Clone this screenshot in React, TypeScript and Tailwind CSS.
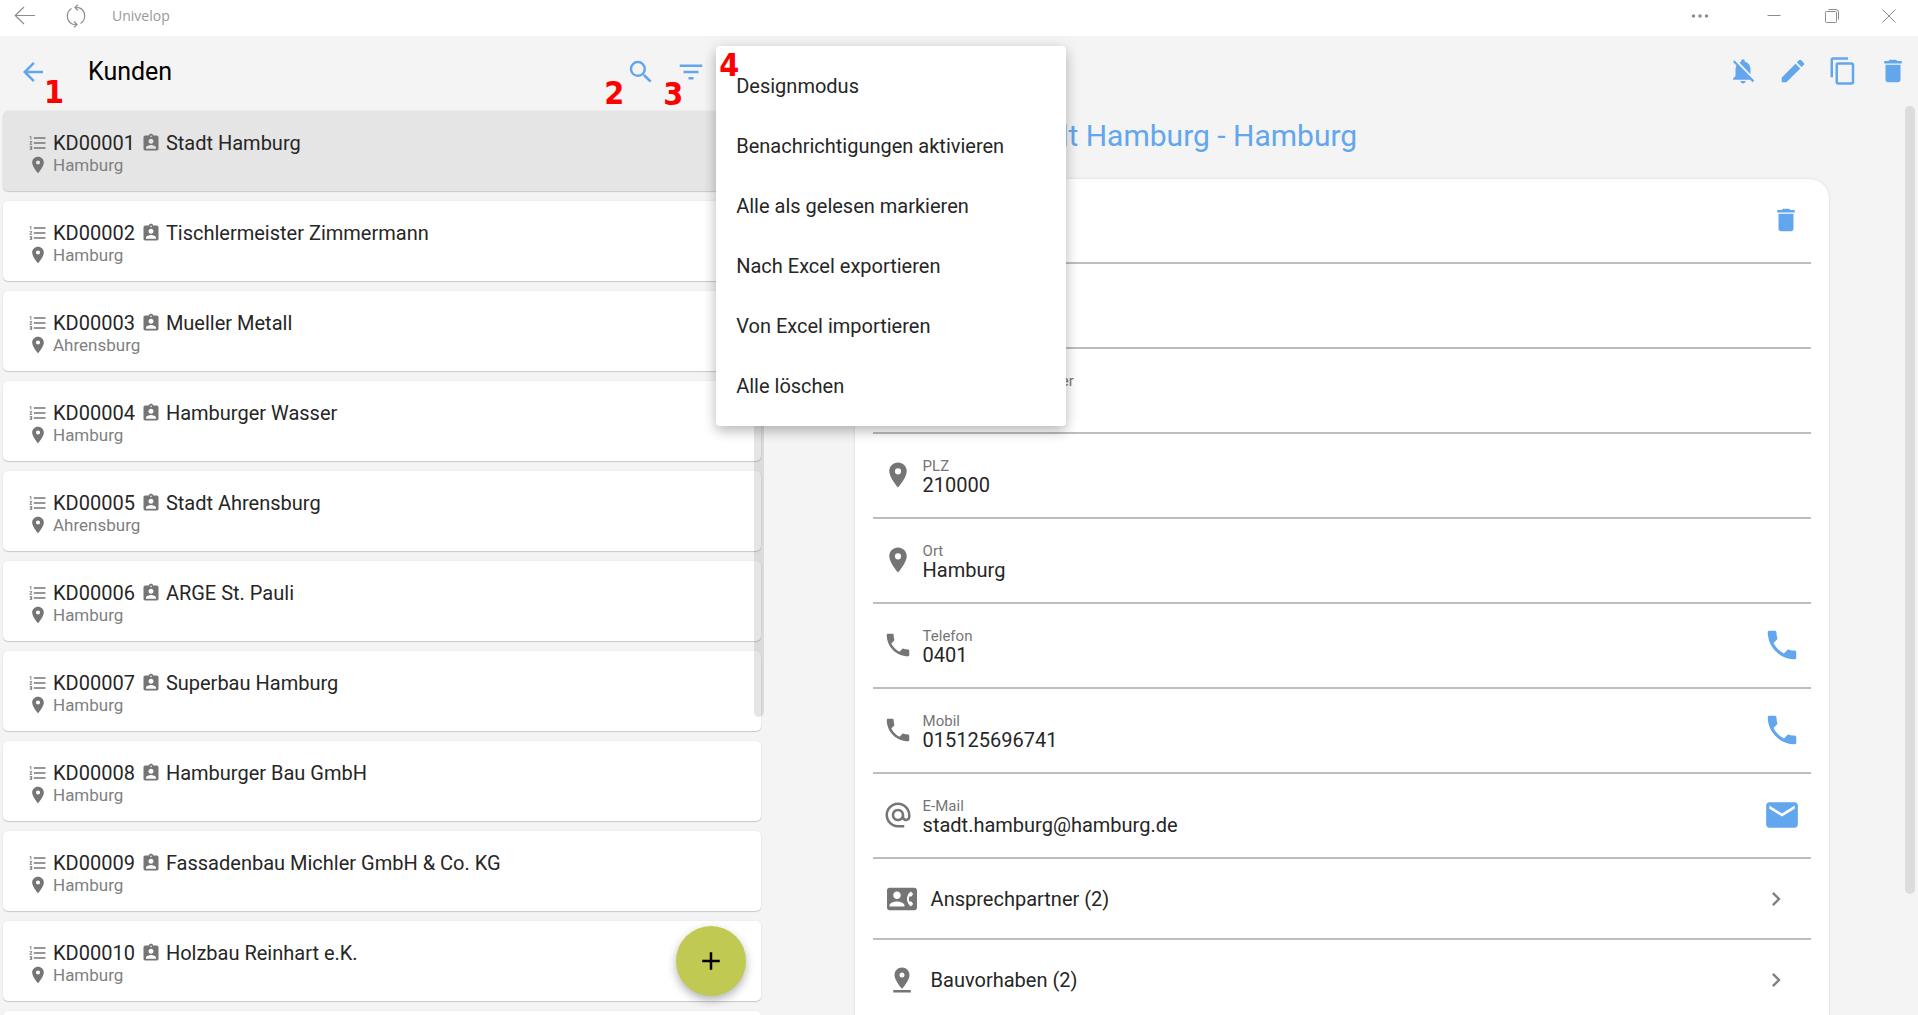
import type { ReactNode } from "react";
import type { IconType } from "react-icons";
import {
  MdAdd,
  MdAlternateEmail,
  MdArrowBack,
  MdAssignmentInd,
  MdChevronRight,
  MdContactPhone,
  MdContentCopy,
  MdDelete,
  MdEdit,
  MdEmail,
  MdFilterList,
  MdFormatListNumbered,
  MdMoreVert,
  MdNotificationsOff,
  MdPhone,
  MdPinDrop,
  MdPlace,
  MdSearch,
} from "react-icons/md";

const customers = [
  { id: "KD00001", name: "Stadt Hamburg", city: "Hamburg" },
  { id: "KD00002", name: "Tischlermeister Zimmermann", city: "Hamburg" },
  { id: "KD00003", name: "Mueller Metall", city: "Ahrensburg" },
  { id: "KD00004", name: "Hamburger Wasser", city: "Hamburg" },
  { id: "KD00005", name: "Stadt Ahrensburg", city: "Ahrensburg" },
  { id: "KD00006", name: "ARGE St. Pauli", city: "Hamburg" },
  { id: "KD00007", name: "Superbau Hamburg", city: "Hamburg" },
  { id: "KD00008", name: "Hamburger Bau GmbH", city: "Hamburg" },
  { id: "KD00009", name: "Fassadenbau Michler GmbH & Co. KG", city: "Hamburg" },
  { id: "KD00010", name: "Holzbau Reinhart e.K.", city: "Hamburg" },
];

const menuItems = [
  "Designmodus",
  "Benachrichtigungen aktivieren",
  "Alle als gelesen markieren",
  "Nach Excel exportieren",
  "Von Excel importieren",
  "Alle löschen",
];

function TitleBar() {
  return (
    <div className="flex h-9 shrink-0 items-center bg-white pb-1 text-[#8c8c8c]">
      <button aria-label="Zurück" className="flex h-8 w-[50px] items-center justify-center">
        <svg width="22" height="20" viewBox="0 0 22 20" fill="none" stroke="currentColor" strokeWidth="1.2">
          <path d="M21 9.5H1.5M10 1 1.2 9.5 10 18" />
        </svg>
      </button>
      <button aria-label="Neu laden" className="flex h-8 w-[52px] items-center justify-center">
        <svg width="20" height="24" viewBox="0 0 20 24" fill="none" stroke="currentColor" strokeWidth="1.2">
          <path d="M5.5 4.6A8.8 8.8 0 0 0 6.5 20.1L11 20.5" />
          <path d="M14.5 19.4A8.8 8.8 0 0 0 13.5 3.9L9 3.5" />
          <path d="M12 .7 9 3.5l3 3.2" />
          <path d="M8 17.3 11 20.5l-3 2.8" />
        </svg>
      </button>
      <span className="ml-[10px] font-['Open_Sans',sans-serif] text-sm text-[#999999]">Univelop</span>
      <div className="ml-auto flex items-center">
        <button aria-label="Weitere Optionen" className="flex h-8 w-[70px] items-center justify-center">
          <svg width="18" height="6" viewBox="0 0 18 6" fill="currentColor">
            <circle cx="2.5" cy="3" r="1.7" />
            <circle cx="9" cy="3" r="1.7" />
            <circle cx="15.5" cy="3" r="1.7" />
          </svg>
        </button>
        <div className="flex pl-[10px]">
          <button aria-label="Minimieren" className="flex h-8 w-[58px] items-center justify-center">
            <svg width="14" height="14" viewBox="0 0 14 14" stroke="currentColor">
              <path d="M.5 6.5h13" />
            </svg>
          </button>
          <button aria-label="Verkleinern" className="flex h-8 w-[57px] items-center justify-center">
            <svg width="14" height="14" viewBox="0 0 14 14" fill="none" stroke="currentColor">
              <rect x=".5" y="2.5" width="11" height="11" rx="1" />
              <path d="M3.5.5H11A2.5 2.5 0 0 1 13.5 3v7.5" />
            </svg>
          </button>
          <button aria-label="Schließen" className="flex h-8 w-[58px] items-center justify-center">
            <svg width="14" height="14" viewBox="0 0 14 14" stroke="currentColor">
              <path d="m.5.5 13 13M13.5.5l-13 13" />
            </svg>
          </button>
        </div>
      </div>
    </div>
  );
}

function ToolButton({ icon: Icon, label, children }: { icon: IconType; label: string; children?: ReactNode }) {
  return (
    <button aria-label={label} className="relative flex h-[70px] w-[50px] items-center justify-center text-[#62a6ee]">
      <Icon size={30} />
      {children}
    </button>
  );
}

const mark =
  "absolute font-['DejaVu_Sans_Condensed','DejaVu_Sans',sans-serif] text-[32px] leading-8 font-bold text-[#ff0000]";

function ActionMenu() {
  return (
    <ul
      role="menu"
      className="absolute top-[10px] left-0 z-20 w-[350px] rounded bg-white py-[10px] text-left shadow-[0_6px_12px_rgba(0,0,0,0.18),0_2px_16px_rgba(0,0,0,0.12)]"
    >
      {menuItems.map((item) => (
        <li key={item} role="none">
          <button role="menuitem" className="h-[60px] w-full px-5 text-left">
            {item}
          </button>
        </li>
      ))}
    </ul>
  );
}

const cardShape =
  "h-20 w-full rounded-[5px] shadow-[0_1px_1px_rgba(0,0,0,0.16),0_0_2px_rgba(0,0,0,0.08)]";

function CustomerCard({ id, name, city, selected }: { id: string; name: string; city: string; selected: boolean }) {
  return (
    <li>
      <button
        className={`${cardShape} flex flex-col pt-5 pl-[25px] text-left ${selected ? "bg-[#e5e5e5]" : "bg-white"}`}
      >
        <span className="flex items-center gap-[5px] leading-6">
          <MdFormatListNumbered size={20} className="text-[#757575]" />
          <span>{id}</span>
          <span className="flex items-center gap-[5px] pl-px">
            <MdAssignmentInd size={20} className="text-[#757575]" />
            <span>{name}</span>
          </span>
        </span>
        <span className="flex items-center gap-[5px] text-[17px] leading-5 text-[#808080]">
          <MdPlace size={20} className="text-[#757575]" />
          <span>{city}</span>
        </span>
      </button>
    </li>
  );
}

function Field({
  icon: Icon,
  label,
  value,
  action,
}: {
  icon: IconType;
  label: string;
  value: string;
  action?: ReactNode;
}) {
  return (
    <div className="flex h-[85px] items-center gap-[10px] border-b-2 border-[#bdbdbd] px-[10px] pb-[2px]">
      <Icon size={30} className="shrink-0 text-[#757575]" />
      <dl className="flex-1 pt-[2px]">
        <dt className="text-[15px] leading-[18px] text-[#757575]">{label}</dt>
        <dd className="min-h-5 leading-5">{value}</dd>
      </dl>
      {action}
    </div>
  );
}

function SubList({ icon: Icon, label }: { icon: IconType; label: string }) {
  return (
    <button className="flex h-[81px] w-full items-center gap-[14px] border-b-2 border-[#bdbdbd] pr-[21px] pl-[14px] text-left">
      <Icon size={30} className="shrink-0 text-[#757575]" />
      <span className="flex-1">{label}</span>
      <MdChevronRight size={28} className="text-[#808080]" />
    </button>
  );
}

export default function App() {
  return (
    <div className="flex h-screen flex-col overflow-hidden bg-[#f4f4f4] font-[Roboto,sans-serif] text-xl text-[#262626]">
      <TitleBar />
      <div className="flex min-h-0 flex-1">
        <section className="relative flex w-2/5 flex-col">
          <header className="flex h-[71px] shrink-0 items-center pr-px">
            <div className="pl-2">
              <ToolButton icon={MdArrowBack} label="Zurück">
                <span className={`${mark} top-[39px] left-9`}>1</span>
              </ToolButton>
            </div>
            <h1 className="ml-[30px] flex-1 text-[25px] text-black">Kunden</h1>
            <ToolButton icon={MdSearch} label="Suchen">
              <span className={`${mark} top-10 -left-3`}>2</span>
            </ToolButton>
            <ToolButton icon={MdFilterList} label="Filtern">
              <span className={`${mark} top-[41px] -left-[3px]`}>3</span>
            </ToolButton>
            <div className="relative self-stretch">
              <ToolButton icon={MdMoreVert} label="Menü" />
              <ActionMenu />
              <span className={`${mark} top-[13px] left-[3px] z-30`}>4</span>
            </div>
          </header>
          <div className="relative min-h-0 flex-1 overflow-hidden pt-1 pr-[6px] pl-[3px]">
            <ul className="flex flex-col gap-[10px]">
              {customers.map((c, i) => (
                <CustomerCard key={c.id} {...c} selected={i === 0} />
              ))}
              <li aria-hidden="true" className={`${cardShape} bg-white`} />
            </ul>
            <div className="absolute top-0 right-[3px] h-[610px] w-[10px] rounded-full bg-black/10" />
          </div>
          <button
            aria-label="Kunde hinzufügen"
            className="absolute right-[21px] bottom-[19px] flex size-[70px] items-center justify-center rounded-full bg-[#c0ca53] text-black shadow-[0_4px_10px_rgba(0,0,0,0.3)]"
          >
            <MdAdd size={30} />
          </button>
        </section>

        <main className="relative flex min-w-0 flex-1 flex-col">
          <header className="flex h-[70px] shrink-0 justify-end">
            <ToolButton icon={MdNotificationsOff} label="Benachrichtigungen aus" />
            <ToolButton icon={MdEdit} label="Bearbeiten" />
            <ToolButton icon={MdContentCopy} label="Kopieren" />
            <ToolButton icon={MdDelete} label="Löschen" />
          </header>
          <div className="min-h-0 flex-1 overflow-hidden pr-[2px]">
            <div className="mx-auto w-[85%] max-w-[974px]">
              <h2 className="flex h-[73px] items-center pb-[14px] pl-[153px] text-[30px] text-[#62a6ee]">
                Stadt Hamburg - Hamburg
              </h2>
              <div className="rounded-[20px] bg-white px-[18px] pb-5 shadow-[0_0_3px_rgba(0,0,0,0.12)]">
                <Field
                  icon={MdFormatListNumbered}
                  label="Nummer"
                  value="KD00001"
                  action={
                    <button aria-label="Eintrag löschen" className="text-[#62a6ee]">
                      <MdDelete size={30} />
                    </button>
                  }
                />
                <Field icon={MdAssignmentInd} label="Name" value="Stadt Hamburg" />
                <Field icon={MdPlace} label="Straße & Hausnummer" value="" />
                <Field icon={MdPlace} label="PLZ" value="210000" />
                <Field icon={MdPlace} label="Ort" value="Hamburg" />
                <Field
                  icon={MdPhone}
                  label="Telefon"
                  value="0401"
                  action={
                    <a href="tel:0401" aria-label="Telefon anrufen" className="text-[#62a6ee]">
                      <MdPhone size={38} />
                    </a>
                  }
                />
                <Field
                  icon={MdPhone}
                  label="Mobil"
                  value="015125696741"
                  action={
                    <a href="tel:015125696741" aria-label="Mobil anrufen" className="text-[#62a6ee]">
                      <MdPhone size={38} />
                    </a>
                  }
                />
                <Field
                  icon={MdAlternateEmail}
                  label="E-Mail"
                  value="stadt.hamburg@hamburg.de"
                  action={
                    <a href="mailto:stadt.hamburg@hamburg.de" aria-label="E-Mail senden" className="text-[#62a6ee]">
                      <MdEmail size={38} />
                    </a>
                  }
                />
                <SubList icon={MdContactPhone} label="Ansprechpartner (2)" />
                <SubList icon={MdPinDrop} label="Bauvorhaben (2)" />
              </div>
            </div>
          </div>
          <div className="absolute top-[70px] right-[3px] h-[788px] w-[10px] rounded-full bg-[#dcdcdc]" />
        </main>
      </div>
    </div>
  );
}
